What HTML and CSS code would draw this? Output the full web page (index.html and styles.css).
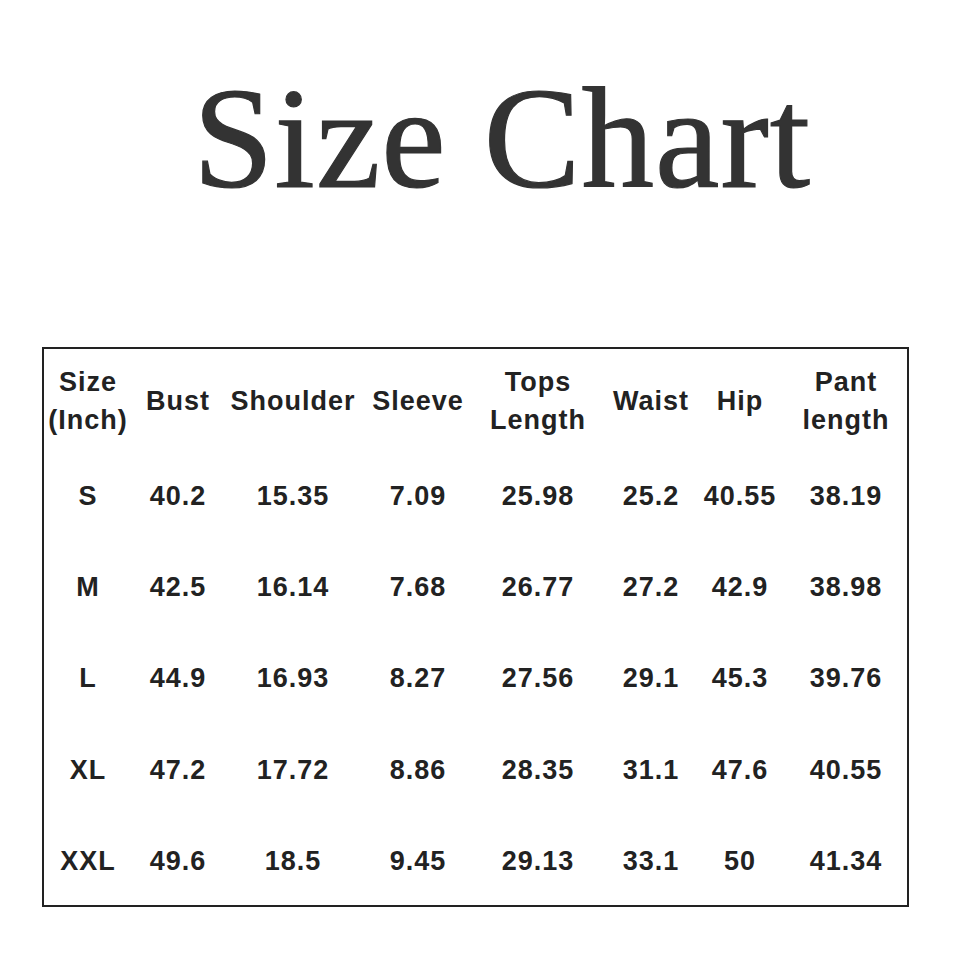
FILE: index.html
```html
<!DOCTYPE html>
<html>
<head>
<meta charset="utf-8">
<link rel="stylesheet" href="styles.css">
</head>
<body>
<h1 class="title">Size Chart</h1>
<div class="chart">
  <div class="row head">
    <div class="cell">Size<br>(Inch)</div>
    <div class="cell">Bust</div>
    <div class="cell">Shoulder</div>
    <div class="cell">Sleeve</div>
    <div class="cell">Tops<br>Length</div>
    <div class="cell">Waist</div>
    <div class="cell">Hip</div>
    <div class="cell">Pant<br>length</div>
  </div>
  <div class="row">
    <div class="cell">S</div><div class="cell">40.2</div><div class="cell">15.35</div><div class="cell">7.09</div><div class="cell">25.98</div><div class="cell">25.2</div><div class="cell">40.55</div><div class="cell">38.19</div>
  </div>
  <div class="row">
    <div class="cell">M</div><div class="cell">42.5</div><div class="cell">16.14</div><div class="cell">7.68</div><div class="cell">26.77</div><div class="cell">27.2</div><div class="cell">42.9</div><div class="cell">38.98</div>
  </div>
  <div class="row">
    <div class="cell">L</div><div class="cell">44.9</div><div class="cell">16.93</div><div class="cell">8.27</div><div class="cell">27.56</div><div class="cell">29.1</div><div class="cell">45.3</div><div class="cell">39.76</div>
  </div>
  <div class="row">
    <div class="cell">XL</div><div class="cell">47.2</div><div class="cell">17.72</div><div class="cell">8.86</div><div class="cell">28.35</div><div class="cell">31.1</div><div class="cell">47.6</div><div class="cell">40.55</div>
  </div>
  <div class="row">
    <div class="cell">XXL</div><div class="cell">49.6</div><div class="cell">18.5</div><div class="cell">9.45</div><div class="cell">29.13</div><div class="cell">33.1</div><div class="cell">50</div><div class="cell">41.34</div>
  </div>
</div>
</body>
</html>
```
FILE: styles.css
```css
html, body {
  margin: 0;
  padding: 0;
  background: #ffffff;
}
.title {
  margin: 0;
  padding: 63px 0 0 44px;
  height: 153px;
  font-family: "Liberation Serif", serif;
  font-weight: normal;
  font-size: 145px;
  line-height: 150px;
  letter-spacing: 1px;
  color: #333333;
  -webkit-text-stroke: 1.2px #333333;
  text-align: center;
}
.chart {
  margin: 131px 0 0 42px;
  width: 863px;
  border: 2px solid #222222;
  font-family: "Liberation Sans", Arial, sans-serif;
  font-weight: bold;
  font-size: 27px;
  letter-spacing: 1px;
  color: #222222;
}
.row {
  display: grid;
  grid-template-columns: 88px 92px 138px 112px 128px 98px 80px 127px;
  height: 91.2px;
  align-items: center;
}
.row.head {
  height: 100px;
  line-height: 38px;
}
.cell {
  text-align: center;
  white-space: nowrap;
  padding-top: 4px;
}
.cell:last-child {
  padding-left: 5px;
}
```
